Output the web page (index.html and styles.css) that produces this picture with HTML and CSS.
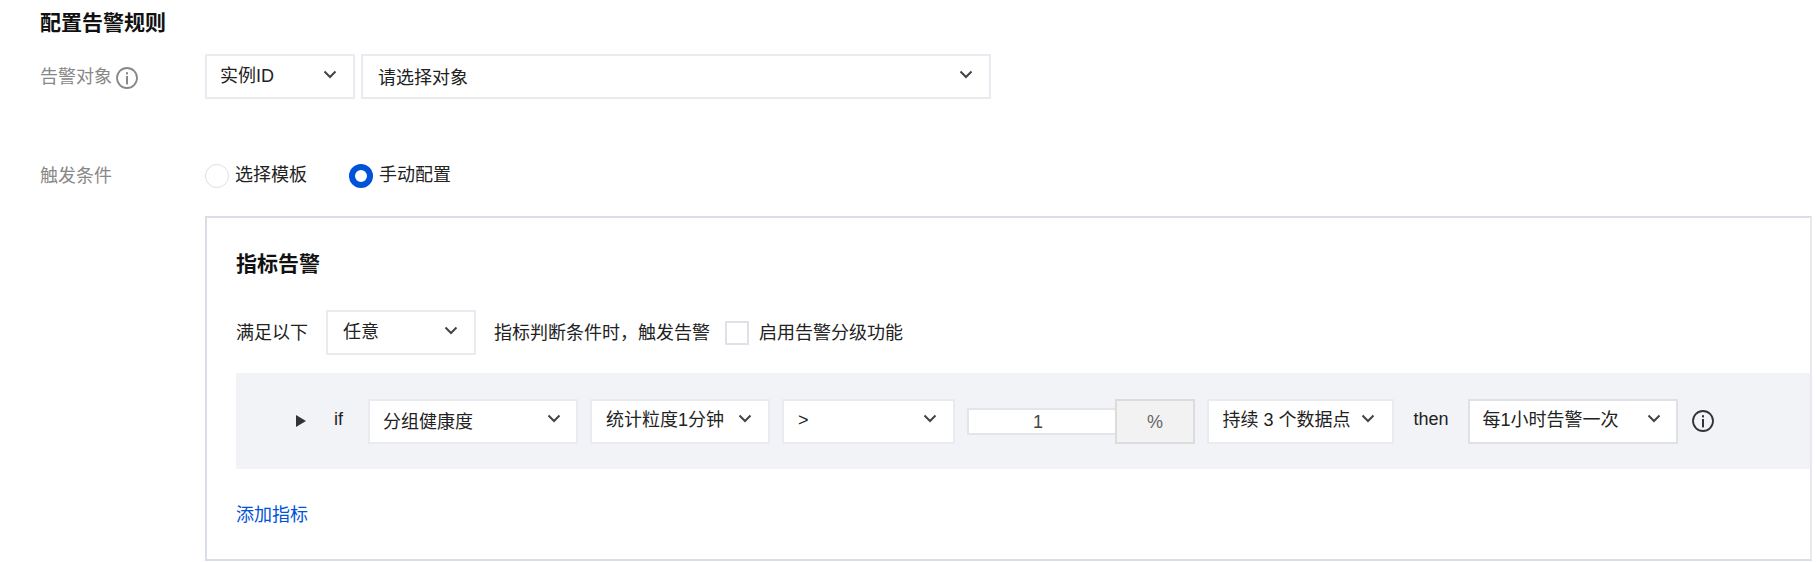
FILE: index.html
```html
<!DOCTYPE html>
<html lang="zh-CN">
<head>
<meta charset="utf-8">
<title>配置告警规则</title>
<link rel="stylesheet" href="styles.css">
</head>
<body>
<svg class="defs" width="0" height="0" aria-hidden="true">
  <symbol id="chev" viewBox="0 0 14 9"><path d="M1.5 1.5 7 7l5.5-5.5" fill="none" stroke="currentColor" stroke-width="2"/></symbol>
  <symbol id="info" viewBox="0 0 22 22"><circle cx="11" cy="11" r="10" fill="none" stroke="currentColor" stroke-width="1.8"/><rect x="10" y="5.2" width="2" height="2.2" fill="currentColor"/><rect x="10" y="9" width="2" height="8.4" fill="currentColor"/></symbol>
</svg>
<main class="page">
  <h2 class="heading">配置告警规则</h2>
  <div class="form-row target-row">
    <div class="label">告警对象<svg class="info info-gray"><use href="#info"/></svg></div>
    <div class="controls">
      <div class="select w-type"><span>实例ID</span><svg class="chev"><use href="#chev"/></svg></div>
      <div class="select w-object"><span class="nudge">请选择对象</span><svg class="chev"><use href="#chev"/></svg></div>
    </div>
  </div>
  <div class="form-row trigger-row">
    <div class="label">触发条件</div>
    <div class="radios">
      <label class="radio"><i class="dot"></i>选择模板</label>
      <label class="radio on"><i class="dot"></i>手动配置</label>
    </div>
  </div>
  <section class="panel">
    <h3 class="panel-title">指标告警</h3>
    <div class="cond-line">
      <span>满足以下</span>
      <div class="select w-any"><span>任意</span><svg class="chev"><use href="#chev"/></svg></div>
      <span>指标判断条件时，触发告警</span>
      <i class="checkbox"></i>
      <span>启用告警分级功能</span>
    </div>
    <div class="rule">
      <i class="caret"></i>
      <span class="kw-if">if</span>
      <div class="select w-metric"><span class="nudge">分组健康度</span><svg class="chev"><use href="#chev"/></svg></div>
      <div class="select w-period"><span>统计粒度1分钟</span><svg class="chev"><use href="#chev"/></svg></div>
      <div class="select w-op"><span>&gt;</span><svg class="chev"><use href="#chev"/></svg></div>
      <div class="number"><div class="num-input">1</div><div class="num-unit">%</div></div>
      <div class="select w-last"><span>持续 3 个数据点</span><svg class="chev"><use href="#chev"/></svg></div>
      <span class="kw-then">then</span>
      <div class="select w-freq"><span>每1小时告警一次</span><svg class="chev"><use href="#chev"/></svg></div>
      <svg class="info info-dark"><use href="#info"/></svg>
    </div>
    <a class="add-link" href="#">添加指标</a>
  </section>
</main>
</body>
</html>
```

FILE: styles.css
```css
* { box-sizing: border-box; }
html, body { margin: 0; background: #fff; }
body {
  font-family: "Liberation Sans", "Noto Sans CJK SC", sans-serif;
  font-size: 18px;
  line-height: 26px;
  color: #222;
  overflow: hidden;
}
.defs { position: absolute; }
.page { padding-left: 40px; height: 562px; }
.heading {
  margin: 0;
  height: 54px;
  padding-top: 9px;
  font-size: 21px;
  line-height: 28px;
  font-weight: 700;
  color: #111;
}
.form-row { display: flex; }
.label {
  width: 165px;
  flex: none;
  display: flex;
  align-items: center;
  color: #888;
}
.target-row { height: 45px; }
.trigger-row { height: 25px; margin-top: 64px; }
.controls { display: flex; gap: 6px; }
.select {
  display: flex;
  align-items: center;
  justify-content: space-between;
  height: 45px;
  padding: 0 16px 0 15px;
  background: #fff;
  border: 2px solid #e9ebf1;
  flex: none;
}
.select > span { margin-top: -2px; }
.select > .nudge { margin-top: 2px; }
.chev { width: 14px; height: 9px; color: #444; flex: none; margin-top: -4px; }
.rule .chev { margin-top: -5px; }
.w-type { width: 150px; padding-left: 13px; }
.w-object { width: 630px; }
.w-any { width: 150px; }
.w-metric { width: 209.5px; padding-left: 13px; padding-right: 15px; }
.w-period { width: 179.5px; padding-left: 14px; }
.w-op { width: 172.5px; padding-left: 14px; }
.w-last { width: 187px; padding-left: 14px; padding-right: 17px; margin-left: -1px; }
.w-freq { width: 210px; padding-left: 13px; padding-right: 15px; border-color: #dfe1e6; }
.info { width: 22px; height: 22px; flex: none; }
.info-gray { color: #888; margin-left: 4px; margin-top: 2px; }
.info-dark { color: #333; margin-left: 1.5px; }
.radios { display: flex; gap: 42px; height: 25px; align-items: center; }
.radio { display: flex; align-items: center; gap: 6px; margin-top: -1px; }
.dot {
  width: 24px;
  height: 24px;
  border-radius: 50%;
  border: 1.5px solid #dcdfe8;
  background: #fff;
  flex: none;
  margin-top: 2px;
}
.on .dot { border: 6px solid #0052d9; }
.panel {
  margin-top: 28px;
  margin-left: 165px;
  height: 345px;
  width: 1607px;
  border: 2px solid #d9dde6;
  border-right-color: #e7e9ee;
  padding: 0 0 0 29px;
}
.panel-title {
  margin: 0;
  height: 92px;
  padding-top: 32px;
  font-size: 21px;
  line-height: 28px;
  font-weight: 700;
  color: #111;
}
.cond-line { display: flex; align-items: center; height: 45px; }
.cond-line .select { margin: 0 18px; }
.checkbox {
  width: 24px;
  height: 24px;
  margin: 0 10px 0 15px;
  border: 2px solid #dfe1e8;
  background: #fff;
  flex: none;
}
.rule {
  display: flex;
  align-items: center;
  height: 96px;
  margin-top: 18px;
  padding-left: 60px;
  background: #f2f3f7;
  gap: 12.5px;
}
.rule .select { height: 45px; }
.caret {
  width: 0;
  height: 0;
  border-left: 10px solid #333;
  border-top: 6px solid transparent;
  border-bottom: 6px solid transparent;
  flex: none;
}
.kw-if { margin-left: 15.5px; margin-right: 12.5px; margin-top: -4px; }
.kw-then { margin: -4px 6.5px 0 7.5px; }
.number { display: flex; align-items: center; flex: none; }
.num-input {
  width: 148px;
  height: 27px;
  line-height: 24px;
  padding-right: 8px;
  text-align: center;
  background: #fff;
  border: 2px solid #e4e5ea;
  border-right: 0;
  color: #444;
}
.num-unit {
  width: 80px;
  height: 45px;
  line-height: 43px;
  text-align: center;
  background: #f2f2f2;
  border: 2px solid #dcdcdc;
  color: #666;
}
.add-link {
  display: block;
  margin-top: 33px;
  width: 72px;
  color: #0052d9;
  text-decoration: none;
}
```
